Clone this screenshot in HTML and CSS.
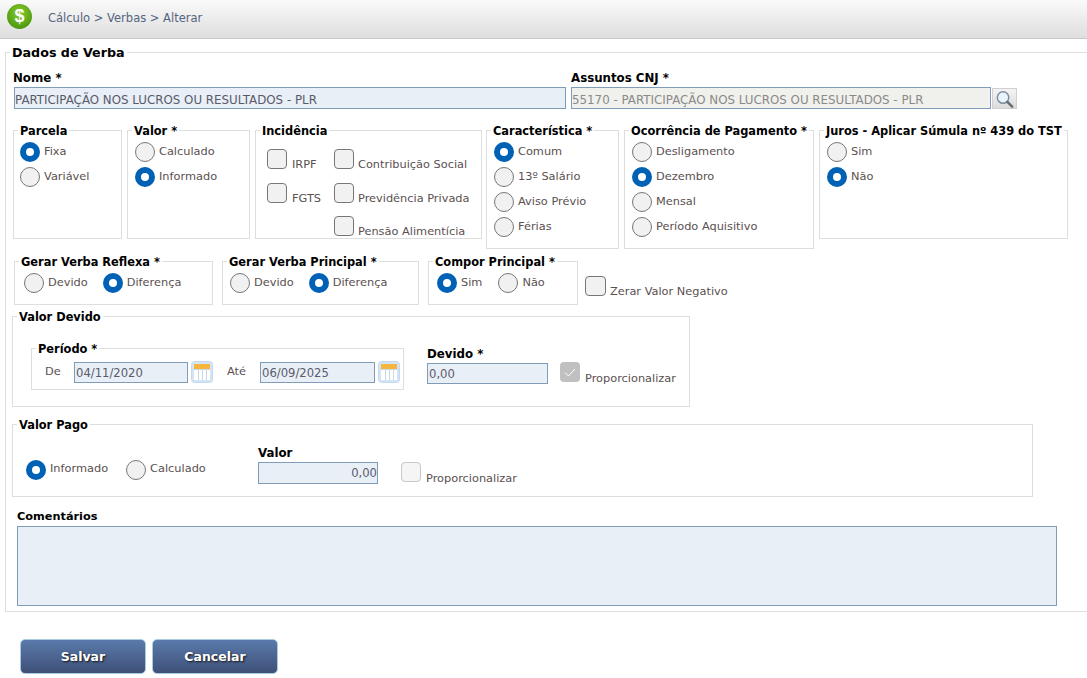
FILE: index.html
```html
<!DOCTYPE html>
<html lang="pt-BR">
<head>
<meta charset="utf-8">
<title>Dados de Verba</title>
<link rel="stylesheet" href="styles.css">
</head>
<body>
<header class="topbar">
  <span class="logo">$</span>
  <span class="crumbs">Cálculo &gt; Verbas &gt; Alterar</span>
</header>
<main class="page">
<form>
<fieldset class="box outer">
  <legend class="title">Dados de Verba</legend>
  <div class="row row-cnj">
    <div class="col nome">
      <label class="lbl lbl-nome">Nome *</label>
      <div class="input wide w-nome">PARTICIPAÇÃO NOS LUCROS OU RESULTADOS - PLR</div>
    </div>
    <div class="col assunto">
      <label class="lbl">Assuntos CNJ *</label>
      <div class="inline">
        <div class="input wide off w-assunto">55170 - PARTICIPAÇÃO NOS LUCROS OU RESULTADOS - PLR</div>
        <button type="button" class="search" aria-label="Buscar">
          <svg width="24" height="20" viewBox="0 0 24 20"><circle cx="10.500" cy="8.500" r="6" fill="#eaf3fb" stroke="#7b8fa3" stroke-width="1.500"/><path d="M15 13l5 5" stroke="#6c6c6c" stroke-width="2.600" stroke-linecap="round"/></svg>
        </button>
      </div>
    </div>
  </div>

  <div class="row row-options">
    <fieldset class="box tall parcela">
      <legend>Parcela</legend>
      <div class="stack">
        <div class="opt"><i class="radio on"></i>Fixa</div>
        <div class="opt"><i class="radio"></i>Variável</div>
      </div>
    </fieldset>
    <fieldset class="box tall valor">
      <legend>Valor *</legend>
      <div class="stack">
        <div class="opt"><i class="radio"></i>Calculado</div>
        <div class="opt"><i class="radio on"></i>Informado</div>
      </div>
    </fieldset>
    <fieldset class="box tall incid">
      <legend>Incidência</legend>
      <div class="incid-grid">
        <div class="chk"><i class="check"></i>IRPF</div>
        <div class="chk narrow"><i class="check"></i>Contribuição Social</div>
        <div class="chk"><i class="check"></i>FGTS</div>
        <div class="chk narrow"><i class="check"></i>Previdência Privada</div>
        <div class="chk narrow second"><i class="check"></i>Pensão Alimentícia</div>
      </div>
    </fieldset>
    <fieldset class="box taller carac">
      <legend>Característica *</legend>
      <div class="stack">
        <div class="opt"><i class="radio on"></i>Comum</div>
        <div class="opt"><i class="radio"></i>13º Salário</div>
        <div class="opt"><i class="radio"></i>Aviso Prévio</div>
        <div class="opt"><i class="radio"></i>Férias</div>
      </div>
    </fieldset>
    <fieldset class="box taller ocorr">
      <legend>Ocorrência de Pagamento *</legend>
      <div class="stack">
        <div class="opt"><i class="radio"></i>Desligamento</div>
        <div class="opt"><i class="radio on"></i>Dezembro</div>
        <div class="opt"><i class="radio"></i>Mensal</div>
        <div class="opt"><i class="radio"></i>Período Aquisitivo</div>
      </div>
    </fieldset>
    <fieldset class="box tall juros">
      <legend>Juros - Aplicar Súmula nº 439 do TST</legend>
      <div class="stack">
        <div class="opt"><i class="radio"></i>Sim</div>
        <div class="opt"><i class="radio on"></i>Não</div>
      </div>
    </fieldset>
  </div>

  <div class="row row-gerar">
    <fieldset class="box short reflexa">
      <legend>Gerar Verba Reflexa *</legend>
      <div class="across">
        <div class="opt"><i class="radio"></i>Devido</div>
        <div class="opt"><i class="radio on"></i>Diferença</div>
      </div>
    </fieldset>
    <fieldset class="box short principal">
      <legend>Gerar Verba Principal *</legend>
      <div class="across">
        <div class="opt"><i class="radio"></i>Devido</div>
        <div class="opt"><i class="radio on"></i>Diferença</div>
      </div>
    </fieldset>
    <fieldset class="box short compor">
      <legend>Compor Principal *</legend>
      <div class="across">
        <div class="opt"><i class="radio on"></i>Sim</div>
        <div class="opt"><i class="radio"></i>Não</div>
      </div>
    </fieldset>
    <div class="chk zerar"><i class="check"></i>Zerar Valor Negativo</div>
  </div>

  <fieldset class="box devido">
    <legend>Valor Devido</legend>
    <div class="devido-row">
      <fieldset class="box periodo">
        <legend>Período *</legend>
        <div class="periodo-row">
          <span class="de">De</span>
          <div class="input thin date">04/11/2020</div>
          <svg class="cal" width="22" height="22" viewBox="0 0 22 22"><rect x=".5" y=".5" width="21" height="21" rx="3" fill="#d3e4f7" stroke="#c4d9f0"/><rect x="3" y="3" width="16" height="16" fill="#fff"/><rect x="3" y="3" width="16" height="5" fill="#f5b63e"/><path d="M3 8.500h16M7.500 9v10M11.500 9v10M15.500 9v10" stroke="#c9d8e8"/></svg>
          <span class="ate">Até</span>
          <div class="input thin date date-b">06/09/2025</div>
          <svg class="cal" width="22" height="22" viewBox="0 0 22 22"><rect x=".5" y=".5" width="21" height="21" rx="3" fill="#d3e4f7" stroke="#c4d9f0"/><rect x="3" y="3" width="16" height="16" fill="#fff"/><rect x="3" y="3" width="16" height="5" fill="#f5b63e"/><path d="M3 8.500h16M7.500 9v10M11.500 9v10M15.500 9v10" stroke="#c9d8e8"/></svg>
        </div>
      </fieldset>
      <div class="col devido-col">
        <label class="lbl">Devido *</label>
        <div class="input thin w-devido">0,00</div>
      </div>
      <div class="chk prop prop-a">
        <i class="check mute-on"><svg width="20" height="20" viewBox="0 0 20 20"><path d="M5 10.500l3.500 3.500 6.500-7" fill="none" stroke="#fff" stroke-width="1"/></svg></i>Proporcionalizar
      </div>
    </div>
  </fieldset>

  <fieldset class="box pago">
    <legend>Valor Pago</legend>
    <div class="pago-row">
      <div class="across pago-opts">
        <div class="opt"><i class="radio on"></i>Informado</div>
        <div class="opt"><i class="radio"></i>Calculado</div>
      </div>
      <div class="col pago-col">
        <label class="lbl">Valor</label>
        <div class="input w-valor">0,00</div>
      </div>
      <div class="chk prop prop-b"><i class="check mute"></i>Proporcionalizar</div>
    </div>
  </fieldset>

  <div class="col coment">
    <label class="lbl lbl-coment">Comentários</label>
    <div class="input area"></div>
  </div>
</fieldset>
<div class="actions">
  <button type="button" class="btn">Salvar</button>
  <button type="button" class="btn">Cancelar</button>
</div>
</form>
</main>
</body>
</html>
```
FILE: styles.css
```css
* { box-sizing: border-box; }
html, body { margin: 0; padding: 0; overflow: hidden; height: 100%; background: #fff; }
body { font: 11.35px/14px "DejaVu Sans", sans-serif; color: #5a5050; }

.topbar {
  height: 39px; display: flex; align-items: flex-start;
  background: linear-gradient(#fafafa, #dedede);
  border-bottom: 1px solid #c9c9c9;
}
.logo {
  width: 25px; height: 25px; margin: 4px 0 0 7px; border-radius: 50%;
  background: radial-gradient(circle at 50% 35%, #8ccb2c, #4c9a0e 75%, #3c7f0a);
  color: #fff; font: bold 18px/25px "Liberation Sans", sans-serif; text-align: center;
}
.crumbs { margin: 11px 0 0 16px; color: #55657f; font-size: 11.5px; }

.page { padding-left: 5px; width: 1100px; }
.box { margin: 0; padding: 0; min-width: 0; border: 1px solid #dedede; }
legend {
  margin-left: 4px; padding: 0 2px; height: 16px; white-space: nowrap;
  font: bold 11.4px/18px "DejaVu Sans", sans-serif; color: #000;
}
legend.title { height: 15px; font-size: 12.7px; line-height: 15px; }
.outer { padding: 0 0 5px; border-right: 0; margin-top: 6px; }
.row { display: flex; align-items: flex-start; }
.col { display: flex; flex-direction: column; }
.lbl { font: bold 11.8px/14px "DejaVu Sans", sans-serif; color: #000; margin-bottom: 2px; }
.lbl-nome { margin-left: -1px; }
.lbl-coment { font-size: 11.3px; }
.inline { display: flex; }

.input {
  height: 22px; padding: 0; border: 1px solid #7f9db9; background: #e8eff7;
  color: #5a5a6a; line-height: 21px; white-space: nowrap; overflow: hidden;
  font-size: 11.6px;
}
.thin { height: 21px; line-height: 20px; padding: 0 1px; }
.wide { font-size: 11.85px; line-height: 24px; }
.off { background: #f0f1ec; color: #8a8a8a; }

.row-cnj { margin: 11px 0 0 8px; }
.nome { width: 557px; }
.w-nome { width: 552px; }
.w-assunto { width: 420px; }
.search {
  width: 25px; height: 21px; margin: 1px 0 0 1px; padding: 0; border: 1px solid #d0d0d0;
  background: linear-gradient(#f4f4f4, #dcdcdc); display: flex;
}

.row-options { margin: 13px 0 0 7px; }
.tall { height: 117px; }
.taller { height: 127px; }
.parcela { width: 109px; margin-right: 5px; }
.valor { width: 123px; margin-right: 5px; }
.incid { width: 227px; margin-right: 4px; }
.carac { width: 133px; margin-right: 5px; }
.ocorr { width: 190px; margin-right: 5px; }
.juros { width: 249px; }

.stack { display: flex; flex-direction: column; gap: 5px; padding: 4px 0 0 7px; }
.parcela .stack { padding-left: 6px; }
.across { display: flex; gap: 15px; padding: 4px 0 0 9px; }
.principal .across { padding-left: 7px; }
.compor .across { padding-left: 8px; gap: 16px; }
.opt { display: flex; align-items: center; gap: 4px; height: 20px; padding-bottom: 2px; white-space: nowrap; }
.radio {
  width: 20px; height: 20px; flex: none; border-radius: 50%;
  border: 1px solid #777; background: #f1f1f1; margin-bottom: -2px;
}
.radio.on { border: 6px solid #0061b5; background: #fff; }

.chk { display: flex; align-items: flex-end; gap: 5px; height: 22px; white-space: nowrap; }
.narrow { gap: 4px; }
.check {
  width: 20px; height: 20px; flex: none; align-self: flex-start; display: block;
  border: 1px solid #777; border-radius: 4px; background: #f1f1f1;
}
.prop { height: 23px; }
.mute { border-color: #c8c8c8; background: #f5f5f5; }
.mute-on { border: 0; background: #c0c0c0; }
.mute-on svg { display: block; }
.incid-grid {
  display: grid; grid-template-columns: 67px auto; grid-auto-rows: 33.5px;
  padding: 11px 0 0 11px; align-items: start;
}
.incid-grid .second { grid-column: 2; }

.row-gerar { margin: 4px 0 0 8px; }
.short { height: 52px; }
.reflexa { width: 199px; margin-right: 9px; }
.principal { width: 197px; margin-right: 9px; }
.compor { width: 150px; margin-right: 7px; }
.zerar { margin-top: 23px; gap: 4px; }
.zerar .check { width: 21px; }

.devido { width: 678px; height: 99px; margin: 3px 0 0 6px; }
.devido-row { display: flex; align-items: flex-start; padding: 16px 0 0 18px; }
.periodo { width: 373px; height: 50px; }
.periodo-row { display: flex; align-items: flex-start; padding: 6px 0 0 13px; }
.de { width: 29px; margin-top: 2px; }
.ate { width: 33px; margin: 2px 0 0 14px; }
.date { width: 114px; }
.date-b { width: 115px; }
.cal { margin: -1px 0 0 3px; flex: none; }
.devido-col { margin: 7px 0 0 23px; }
.w-devido { width: 121px; }
.prop-a { margin: 22px 0 0 12px; }

.pago { width: 1021px; height: 81px; margin: 9px 0 0 6px; }
.pago-row { display: flex; align-items: flex-start; padding-left: 13px; }
.pago-opts { width: 232px; gap: 18px; padding: 28px 0 0 0; }
.pago-opts .opt { padding-bottom: 4px; }
.pago-opts .radio { margin-bottom: -4px; }
.pago-col { margin-top: 14px; }
.w-valor { width: 120px; text-align: right; }
.prop-b { margin: 30px 0 0 23px; }

.coment { margin: 13px 0 0 11px; }
.area { width: 1040px; height: 80px; }

.actions { display: flex; gap: 6px; margin: 27px 0 0 15px; }
.btn {
  width: 126px; height: 35px; padding: 0; border: 1px solid #a9cbdf; border-radius: 5px;
  background: linear-gradient(#5a7aab, #3f5078); color: #fff;
  font: bold 12.5px "DejaVu Sans", sans-serif; text-shadow: 1px 1px 2px #111;
}
```
